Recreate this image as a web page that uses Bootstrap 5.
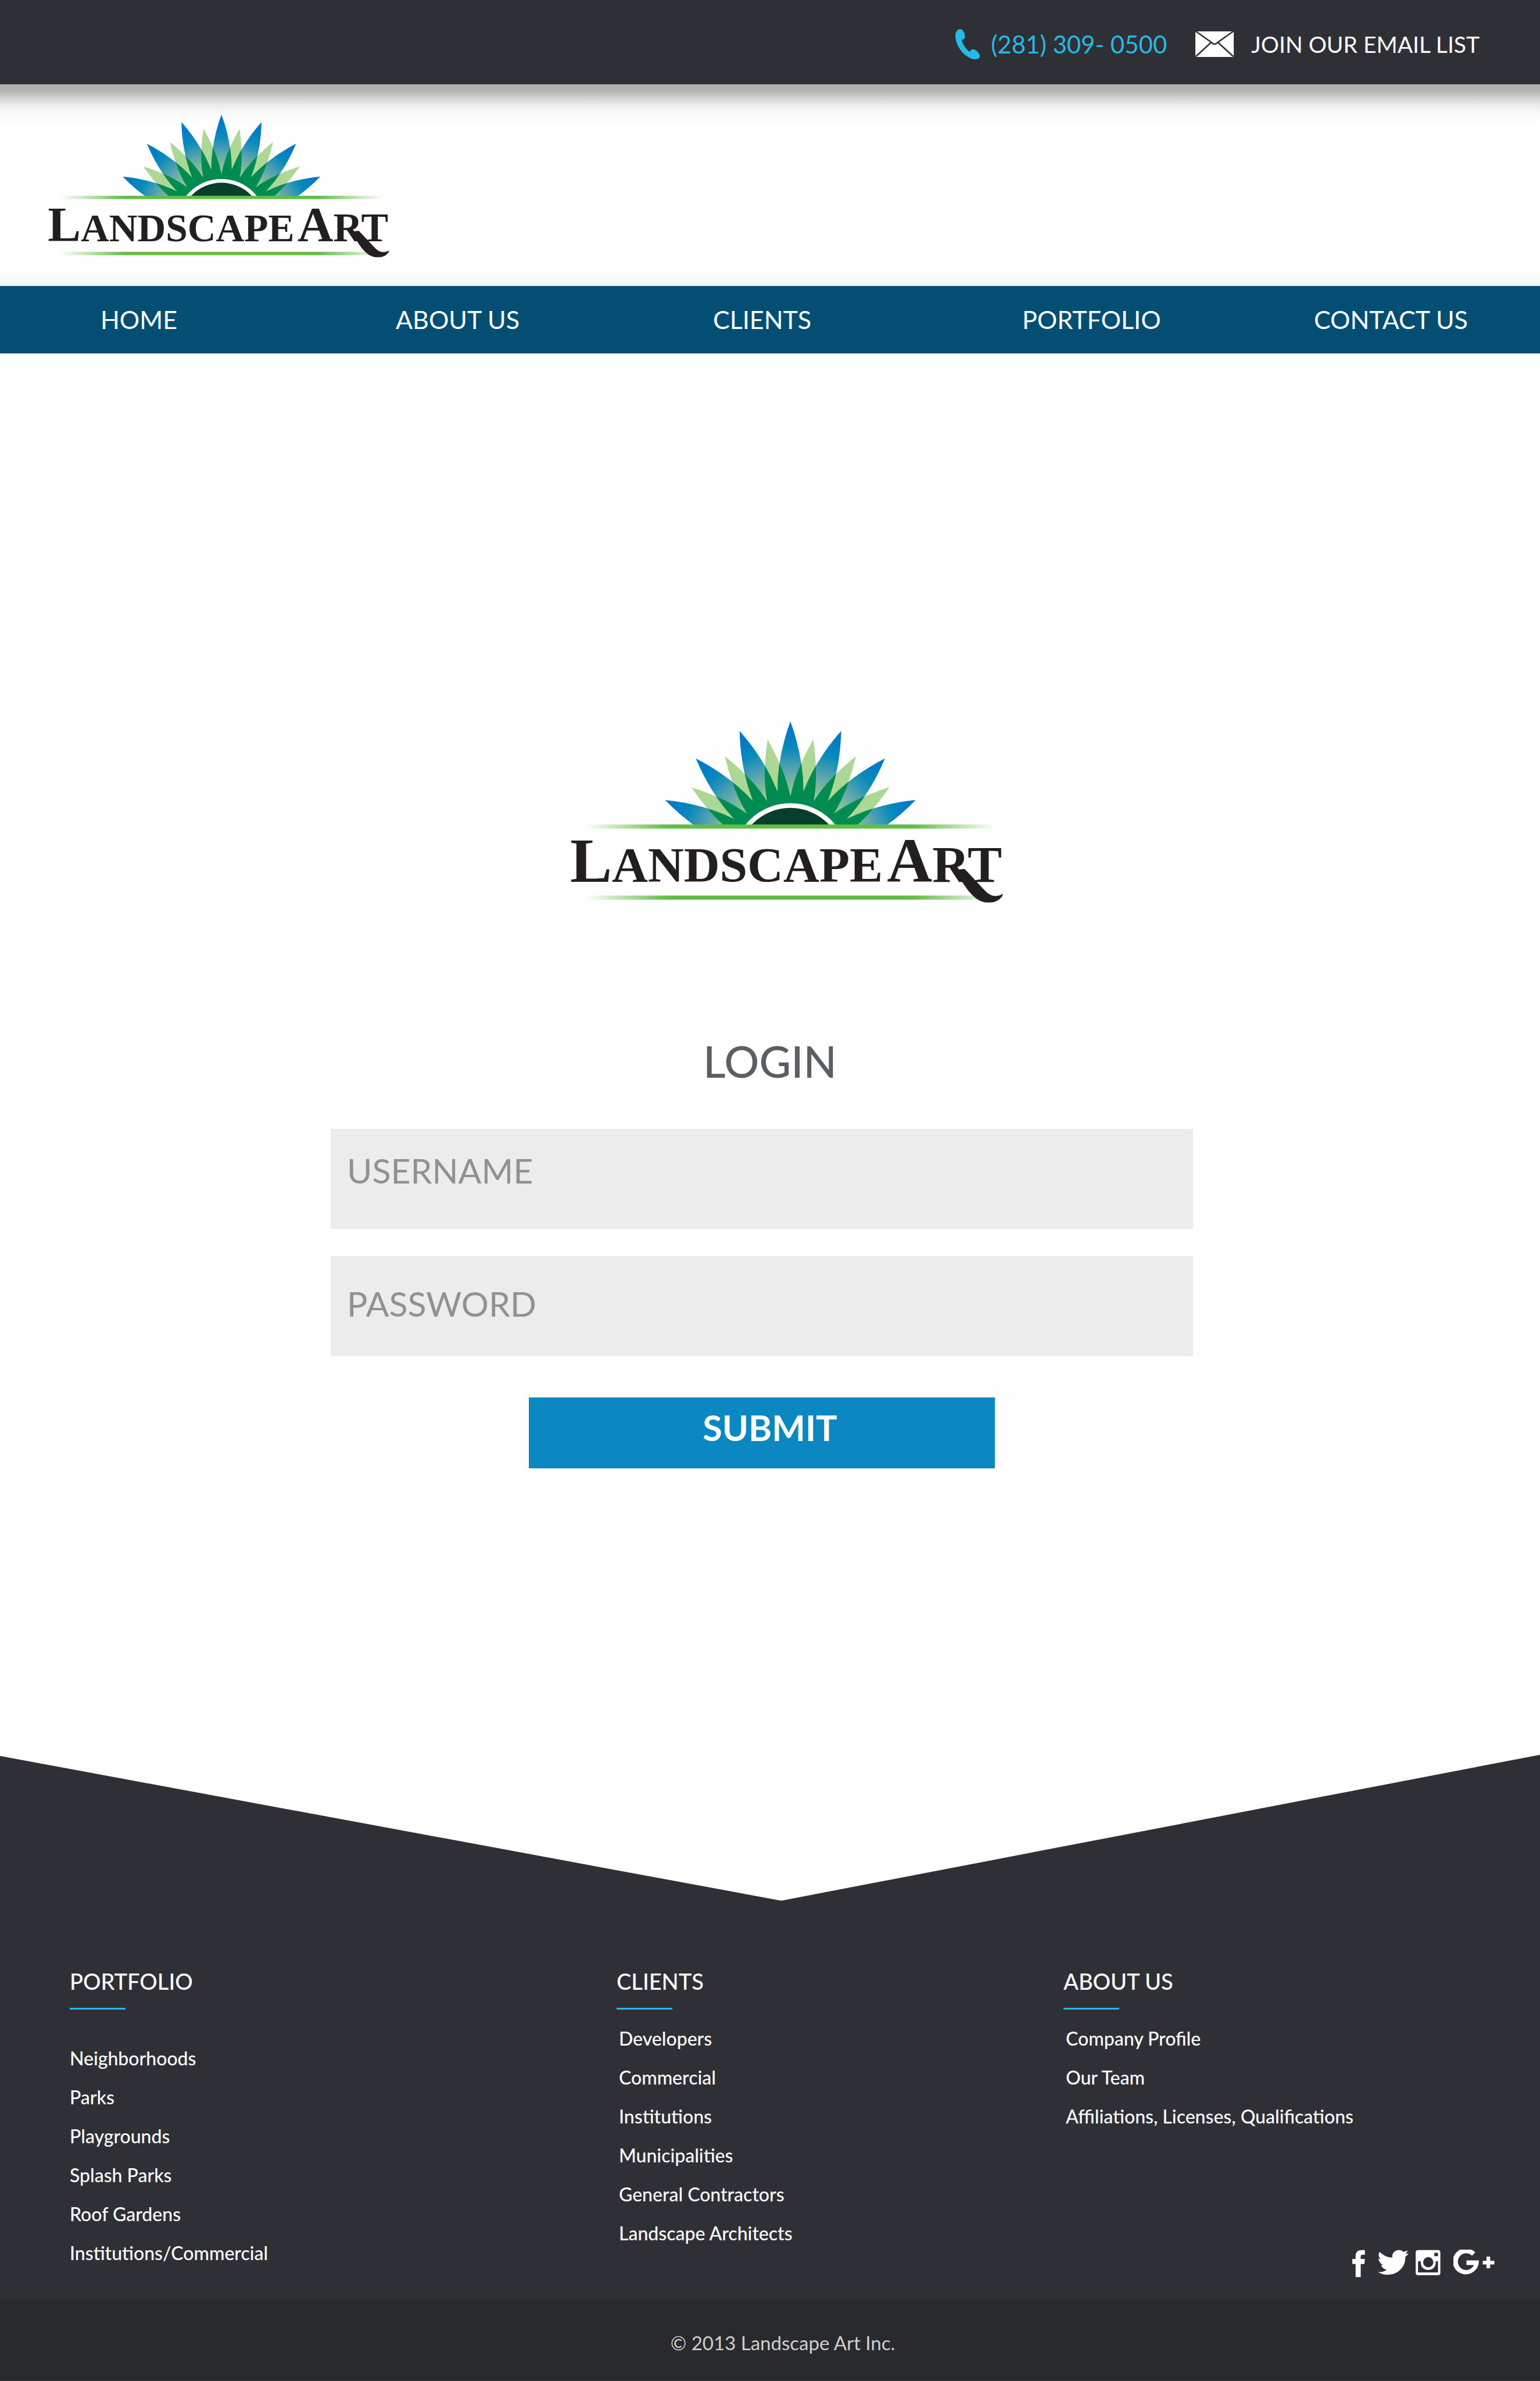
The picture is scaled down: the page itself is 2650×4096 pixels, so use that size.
<!DOCTYPE html>
<html lang="en">
<head>
<meta charset="utf-8">
<meta name="viewport" content="width=device-width, initial-scale=1">
<title>Landscape Art – Login</title>
<link href="https://cdn.jsdelivr.net/npm/bootstrap@5.3.0/dist/css/bootstrap.min.css" rel="stylesheet">
<style>
  body { font-family: Lato, "Open Sans", sans-serif; background: #fefefe; color: #fff; }
  a { color: inherit; text-decoration: none; }
  svg { display: block; flex: none; }

  .topbar { background: #2f3035; min-height: 145px; padding: 6px 104px 0 0; }
  .phone-link { color: #25b9e7; font-size: 42px; line-height: 60px; gap: 18px; margin-right: 49px; }
  .mail-link { font-size: 39px; line-height: 60px; gap: 30px; }

  .brand-area {
    padding: 52px 0 49px 83px;
    background:
      linear-gradient(to top, #f3f3f3, rgba(254,254,254,0) 24px),
      linear-gradient(#adadad, #b6b6b6 13px, #cccccc 21px, #e3e3e3 31px, #f3f3f3 42px, #fbfbfb 55px, #fefefe 71px);
  }
  .brand-small { width: 589px; }
  .brand-large { width: 747px; margin-left: 61px; }

  .site-nav { background: #034e72; padding-left: 173px; display: grid; grid-template-columns: 508fr 546fr 532fr 502fr 389fr; }
  .site-nav .nav-link { padding: 0; font-size: 43px; line-height: 116px; color: #fff; }

  .login-area { padding: 633px 0 493px; }
  .login-title { margin: 228px 0 73px; font-size: 75px; line-height: 88px; font-weight: 500; color: #5b5e63; }
  .login-form { width: 56%; margin-right: 28px; }
  .login-form .form-control { height: 172px; border: 0; border-radius: 0; background: #ececec; font-size: 59px; line-height: 72px; color: #555; padding: 0 28px; }
  .login-form .form-control::placeholder { color: #919191; opacity: 1; }
  .login-form .field-user { padding-bottom: 28px; margin-bottom: 47px; }
  .login-form .field-pass { padding-bottom: 8px; margin-bottom: 71px; }
  .submit-btn { width: 54%; height: 122px; border-radius: 0; border: 0; background: #0b88c2; color: #fff; font-size: 61px; line-height: 72px; font-weight: 700; padding: 0 0 18px 28px; }

  .site-footer { background: #2f3035; clip-path: polygon(0 2px, 50.73% 251px, 100% 0, 100% 100%, 0 100%); }
  .footer-cols { display: grid; grid-template-columns: 941fr 769fr 820fr; padding: 367px 0 37px 120px; }
  .footer-cols h2 { margin: 0 0 24px; font-size: 38px; line-height: 44px; font-weight: 500; }
  .footer-cols h2::after { content: ""; display: block; width: 96px; height: 3px; margin-top: 24px; background: #25b9e7; }
  .footer-cols ul { margin: 0; font-size: 32px; line-height: 67px; font-weight: 500; }
  .footer-cols .list-late { padding: 26px 0 9px; }
  .footer-cols .list-inset { margin-top: -8px; padding-left: 4px; }
  .social { padding-right: 78px; }
  .copyright { background: #292a2e; color: #cfcfcf; font-size: 33px; line-height: 60px; padding: 45px 0 36px 44px; }
</style>
</head>
<body>

<svg width="0" height="0" class="position-absolute" aria-hidden="true">
  <defs>
    <radialGradient id="petalBlue" gradientUnits="userSpaceOnUse" cx="0" cy="0" r="235">
      <stop offset=".48" stop-color="#9bc898"/><stop offset=".64" stop-color="#5fa6ac"/>
      <stop offset=".8" stop-color="#0a8abb"/><stop offset=".92" stop-color="#007bc6"/><stop offset="1" stop-color="#0075c8"/>
    </radialGradient>
    <linearGradient id="ruleGreen"><stop offset="0" stop-color="#62bd45" stop-opacity="0"/><stop offset=".2" stop-color="#62bd45"/><stop offset=".8" stop-color="#62bd45"/><stop offset="1" stop-color="#62bd45" stop-opacity="0"/></linearGradient>
    <path id="bluePetal" d="M0-235Q22-175 22-117Q22-90 12-50H-12Q-22-90-22-117Q-22-175 0-235Z"/>
    <path id="greenPetal" d="M0-208Q20-150 20-106Q20-80 12-50H-12Q-20-80-20-106Q-20-150 0-208Z"/>
    <clipPath id="lightClip">
      <use href="#greenPetal" transform="rotate(-53.5)"/><use href="#greenPetal" transform="rotate(-32.1)"/><use href="#greenPetal" transform="rotate(-10.7)"/>
      <use href="#greenPetal" transform="rotate(10.7)"/><use href="#greenPetal" transform="rotate(32.1)"/><use href="#greenPetal" transform="rotate(53.5)"/>
    </clipPath>
    <g id="bluePetals">
      <use href="#bluePetal" transform="rotate(-64.2)"/><use href="#bluePetal" transform="rotate(-42.8)"/><use href="#bluePetal" transform="rotate(-21.4)"/>
      <use href="#bluePetal"/>
      <use href="#bluePetal" transform="rotate(21.4)"/><use href="#bluePetal" transform="rotate(42.8)"/><use href="#bluePetal" transform="rotate(64.2)"/>
    </g>
    <clipPath id="horizon"><rect x="-300" y="-300" width="600" height="240"/></clipPath>
    <symbol id="logo" viewBox="44 36 733 306">
      <g transform="translate(415 271)"><g clip-path="url(#horizon)">
        <g fill="#acd794"><use href="#greenPetal" transform="rotate(-53.5)"/><use href="#greenPetal" transform="rotate(-32.1)"/><use href="#greenPetal" transform="rotate(-10.7)"/><use href="#greenPetal" transform="rotate(10.7)"/><use href="#greenPetal" transform="rotate(32.1)"/><use href="#greenPetal" transform="rotate(53.5)"/></g>
        <use href="#bluePetals" fill="url(#petalBlue)"/>
        <g clip-path="url(#lightClip)"><use href="#bluePetals" fill="#008c50"/></g>
        <circle r="97" fill="#fff"/><circle r="89" fill="#073f2c"/>
      </g></g>
      <rect x="70" y="210" width="690" height="7" fill="url(#ruleGreen)"/>
      <rect x="70" y="330" width="690" height="7" fill="url(#ruleGreen)"/>
      <g font-family="Liberation Serif, serif" font-weight="700" fill="#231f20">
        <text x="43" y="307" font-size="106">L<tspan font-size="84">ANDSCAPE</tspan></text>
        <text x="578" y="307" font-size="106">A<tspan font-size="87">RT</tspan></text>
      </g>
      <path d="M691 287C706 304 720 342 750 342C764 342 773 334 774 327C764 333 754 332 745 323C732 310 722 298 709 285Z" fill="#231f20"/>
    </symbol>
  </defs>
</svg>

<header>
  <div class="topbar d-flex justify-content-end align-items-center">
    <a href="tel:+12813090500" class="phone-link d-flex align-items-center">
      <svg width="43" height="52" viewBox="0 0 43 52" fill="#25b9e7" aria-hidden="true"><path d="M8 0C13 0 16 6 16.500 13C16.500 17 13 18 11 19C13 27 18 34 24.500 39C26 37 28 34 32 35C38 37 43 44 42 48C41 51 37 52 33 52C16 50 0 29 0 12C0 5 3 0 8 0Z"/></svg>
      <span>(281) 309- 0500</span>
    </a>
    <a href="#" class="mail-link d-flex align-items-center">
      <svg width="66" height="44" viewBox="0 0 66 44" aria-hidden="true"><rect width="66" height="44" rx="2" fill="#fff"/><path d="M1 0L29 20Q33 24 37 20L65 0M1 43L27 19M65 43L39 19" fill="none" stroke="#2f3035" stroke-width="2.500"/></svg>
      <span>JOIN OUR EMAIL LIST</span>
    </a>
  </div>
  <div class="brand-area">
    <a href="#" class="d-inline-block align-top" aria-label="Landscape Art home"><svg class="brand-small" viewBox="0 0 733 306"><use href="#logo" width="733" height="306"/></svg></a>
  </div>
  <nav class="site-nav" aria-label="Main">
    <a class="nav-link" href="#">HOME</a>
    <a class="nav-link" href="#">ABOUT US</a>
    <a class="nav-link" href="#">CLIENTS</a>
    <a class="nav-link" href="#">PORTFOLIO</a>
    <a class="nav-link" href="#">CONTACT US</a>
  </nav>
</header>

<main class="login-area d-flex flex-column align-items-center">
  <svg class="brand-large" viewBox="0 0 733 306" role="img" aria-label="Landscape Art"><use href="#logo" width="733" height="306"/></svg>
  <h1 class="login-title">LOGIN</h1>
  <form class="login-form d-flex flex-column align-items-center">
    <label class="d-block w-100"><input class="form-control field-user" type="text" placeholder="USERNAME" aria-label="Username"></label>
    <label class="d-block w-100"><input class="form-control field-pass" type="password" placeholder="PASSWORD" aria-label="Password"></label>
    <button class="btn submit-btn" type="submit">SUBMIT</button>
  </form>
</main>

<footer class="site-footer">
  <div class="footer-cols">
    <section>
      <h2>PORTFOLIO</h2>
      <ul class="list-unstyled list-late">
        <li><a href="#">Neighborhoods</a></li>
        <li><a href="#">Parks</a></li>
        <li><a href="#">Playgrounds</a></li>
        <li><a href="#">Splash Parks</a></li>
        <li><a href="#">Roof Gardens</a></li>
        <li><a href="#">Institutions/Commercial</a></li>
      </ul>
    </section>
    <section>
      <h2>CLIENTS</h2>
      <ul class="list-unstyled list-inset">
        <li><a href="#">Developers</a></li>
        <li><a href="#">Commercial</a></li>
        <li><a href="#">Institutions</a></li>
        <li><a href="#">Municipalities</a></li>
        <li><a href="#">General Contractors</a></li>
        <li><a href="#">Landscape Architects</a></li>
      </ul>
    </section>
    <section class="d-flex flex-column">
      <h2>ABOUT US</h2>
      <ul class="list-unstyled list-inset">
        <li><a href="#">Company Profile</a></li>
        <li><a href="#">Our Team</a></li>
        <li><a href="#">Affiliations, Licenses, Qualifications</a></li>
      </ul>
      <div class="social d-flex justify-content-end mt-auto">
        <a href="#" aria-label="Facebook"><svg width="44" height="48" viewBox="0 0 54.800 60" fill="#fff"><path d="M7 59V31H0V20H7V14Q7 1 20 1H27V11H22Q18 11 18 15V20H27L26 31H18V59Z"/></svg></a>
        <a href="#" aria-label="Twitter"><svg width="65" height="48" viewBox="0 0 81 60" fill="#fff"><path d="M4 5C12 13 21 17 31 17C30 8 36 1 45 1C50 1 53 3 55 5L64 2C63 5 61 7 59 9L66 8C64 11 62 13 59 15C60 38 42 54 21 54C13 54 6 52 0 48C7 49 14 47 19 43C13 42 8 38 7 33H12C6 31 2 26 1 19L7 21C1 17 0 10 4 5Z"/></svg></a>
        <a href="#" aria-label="Instagram"><svg width="65" height="48" viewBox="0 0 81 60"><rect y="1" width="53" height="54" rx="5" fill="#fff"/><path d="M5 25H11C8 50 46 50 43 25H48V49H5ZM40 7H48V14H40Z" fill="#2f3035"/><circle cx="27" cy="27" r="11" fill="#2f3035"/></svg></a>
        <a href="#" aria-label="Google Plus"><svg width="71" height="48" viewBox="0 0 88.600 60" fill="#fff"><path d="M47 6L40 13A18 18 0 1 0 44 33H28V23H54.500A28 28 0 1 1 47 6ZM71 15H79V24H88V32H79V40H71V32H63V24H71Z"/></svg></a>
      </div>
    </section>
  </div>
  <div class="copyright text-center">© 2013 Landscape Art Inc.</div>
</footer>

<script src="https://cdn.jsdelivr.net/npm/bootstrap@5.3.0/dist/js/bootstrap.bundle.min.js"></script>
</body>
</html>
